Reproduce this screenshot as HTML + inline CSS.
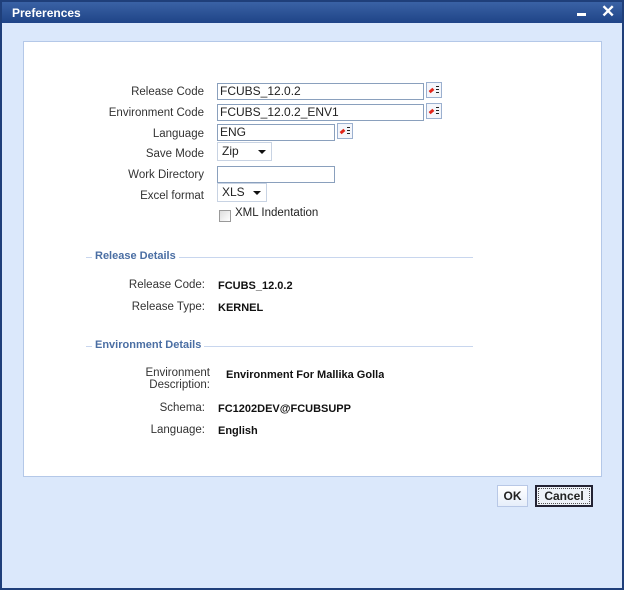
<!DOCTYPE html>
<html><head><style>
body{margin:0;width:624px;height:590px;overflow:hidden;background:#fff;font-family:"Liberation Sans",Arial,sans-serif;font-size:11.5px;color:#222}
.win{position:absolute;left:0;top:0;width:620px;height:586px;border:2px solid #1f3f7a;background:#dbe8fb}
.title{position:absolute;left:0;top:0;width:620px;height:21px;background:linear-gradient(#3a62a5,#1f4487);color:#fff;font-weight:bold;font-size:12px}
.title span{position:absolute;left:10px;top:4px}
.panel{position:absolute;left:21px;top:39px;width:577px;height:434px;background:#fff;border:1px solid #b4c8e8}
.a{position:absolute}
.lbl{position:absolute;text-align:right;width:200px;color:#333}
.inp{position:absolute;height:15px;border:1px solid #8aa0bd;background:#fff;padding-left:2px;line-height:15px;font-size:12px}
.ic{position:absolute;width:14px;height:14px;border:1px solid #9bb0cf;background:#f4f6fb}
.ic:before{content:"";position:absolute;left:2px;top:6px;width:5px;height:3px;background:#e2261b;transform:rotate(-40deg)}
.ic:after{content:"";position:absolute;left:9px;top:3px;width:3px;height:8px;background:repeating-linear-gradient(#222 0 1px,transparent 1px 3px)}
.sel{position:absolute;height:17px;border:1px solid #c8d3e3;background:#fff;padding-left:4px;line-height:17px;font-size:12px}
.sel i{position:absolute;right:5px;top:7px;border:4px solid transparent;border-top:4px solid #111;border-bottom:0}
.sec{position:absolute;left:62px;width:387px;height:1px;background:#c8d6ee}
.sec b{position:absolute;left:6px;top:-7px;background:#fff;padding:0 3px;color:#4a6ea3;font-size:11px}
.v{position:absolute;font-weight:bold;color:#111;font-size:11px}
.btn{position:absolute;height:20px;line-height:20px;text-align:center;font-weight:bold;font-size:12px}
</style></head><body>
<div class="win">
<div class="title"><span>Preferences</span>
<div class="a" style="left:575px;top:11px;width:9px;height:3px;background:#fff"></div>
<div class="a" style="left:599px;top:0px;font-size:17px;font-weight:bold">✕</div></div>
<div class="panel">
<div class="lbl" style="left:-20px;top:44px">Release Code</div>
<div class="inp" style="left:193px;top:41px;width:203px">FCUBS_12.0.2</div><div class="ic" style="left:402px;top:40px"></div>
<div class="lbl" style="left:-20px;top:65px">Environment Code</div>
<div class="inp" style="left:193px;top:62px;width:203px">FCUBS_12.0.2_ENV1</div><div class="ic" style="left:402px;top:61px"></div>
<div class="lbl" style="left:-20px;top:86px">Language</div>
<div class="inp" style="left:193px;top:82px;width:114px">ENG</div><div class="ic" style="left:313px;top:81px"></div>
<div class="lbl" style="left:-20px;top:106px">Save Mode</div>
<div class="sel" style="left:193px;top:100px;width:49px">Zip<i></i></div>
<div class="lbl" style="left:-20px;top:127px">Work Directory</div>
<div class="inp" style="left:193px;top:124px;width:114px"></div>
<div class="lbl" style="left:-20px;top:148px">Excel format</div>
<div class="sel" style="left:193px;top:141px;width:44px">XLS<i></i></div>
<div class="a" style="left:195px;top:168px;width:10px;height:10px;border:1px solid #999;background:linear-gradient(135deg,#ddd,#fff)"></div>
<div class="a" style="left:211px;top:165px">XML Indentation</div>
<div class="sec" style="top:215px"><b>Release Details</b></div>
<div class="lbl" style="left:-19px;top:237px">Release Code:</div><div class="v" style="left:194px;top:238px">FCUBS_12.0.2</div>
<div class="lbl" style="left:-19px;top:259px">Release Type:</div><div class="v" style="left:194px;top:260px">KERNEL</div>
<div class="sec" style="top:304px"><b>Environment Details</b></div>
<div class="lbl" style="left:-14px;top:325px">Environment<br>Description:</div><div class="v" style="left:202px;top:327px;width:158px;overflow:hidden;white-space:nowrap">Environment For Mallika Gollapalli</div>
<div class="lbl" style="left:-19px;top:360px">Schema:</div><div class="v" style="left:194px;top:361px">FC1202DEV@FCUBSUPP</div>
<div class="lbl" style="left:-19px;top:382px">Language:</div><div class="v" style="left:194px;top:383px">English</div>
</div>
<div class="btn" style="left:495px;top:483px;width:29px;border:1px solid #b8c8e6;background:linear-gradient(#fff,#e6eefa)">OK</div>
<div class="btn" style="left:533px;top:483px;width:54px;border:2px solid #223;background:#eef2f8;height:18px;line-height:18px;outline:1px dotted #555;outline-offset:-4px">Cancel</div>
</div>
</body></html>
